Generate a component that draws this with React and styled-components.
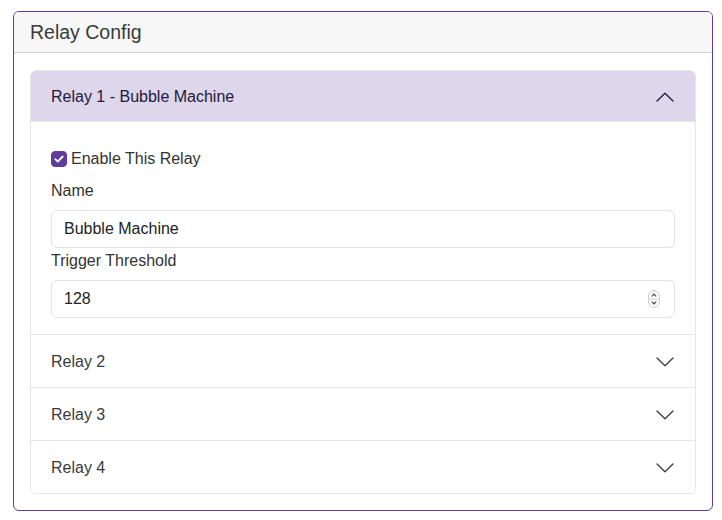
import React, { useState } from 'react'
import styled, { createGlobalStyle } from 'styled-components'

const GlobalStyle = createGlobalStyle`
  body {
    margin: 0;
    background: #ffffff;
    font-family: "Liberation Sans", Arial, sans-serif;
    color: #333333;
  }
  * { box-sizing: border-box; }
`

const Chevron = ({ up }) => (
  <svg width="18" height="10" viewBox="0 0 18 10" fill="none">
    <path
      d={up ? 'M1 9 L9 1.2 L17 9' : 'M1 1 L9 8.8 L17 1'}
      stroke={up ? '#2a1f44' : '#444'}
      strokeWidth="1.4"
      strokeLinejoin="round"
      strokeLinecap="round"
    />
  </svg>
)

const relays = ['Relay 2', 'Relay 3', 'Relay 4']

const App = () => {
  const [enabled, setEnabled] = useState(true)

  return (
    <>
      <GlobalStyle />
      <Card>
        <CardHeader>Relay Config</CardHeader>
        <CardBody>
          <Accordion>
            <Item>
              <ItemHeader active>
                Relay 1 - Bubble Machine
                <Chevron up />
              </ItemHeader>
              <ItemBody>
                <CheckRow onClick={() => setEnabled((p) => !p)}>
                  <Box checked={enabled}>
                    {enabled && (
                      <svg width="10" height="8" viewBox="0 0 10 8" fill="none">
                        <path d="M1.3 4.2 L3.8 6.5 L8.7 1.5" stroke="#fff" strokeWidth="1.8" strokeLinecap="round" strokeLinejoin="round" />
                      </svg>
                    )}
                  </Box>
                  Enable This Relay
                </CheckRow>
                <Label>Name</Label>
                <Field>
                  <Input defaultValue="Bubble Machine" />
                </Field>
                <Label>Trigger Threshold</Label>
                <Field>
                  <Input defaultValue="128" />
                  <Spinner>
                    <svg width="12" height="18" viewBox="0 0 12 18" fill="none">
                      <rect x="0.5" y="0.5" width="11" height="17" rx="5.5" stroke="#cfcfcf" fill="#fafafa" />
                      <line x1="0.5" y1="9" x2="11.5" y2="9" stroke="#d6d6d6" />
                      <path d="M3.8 6.3 L6 4 L8.2 6.3" stroke="#444" strokeWidth="1.1" />
                      <path d="M3.8 11.7 L6 14 L8.2 11.7" stroke="#444" strokeWidth="1.1" />
                    </svg>
                  </Spinner>
                </Field>
              </ItemBody>
            </Item>
            {relays.map((r) => (
              <Item key={r}>
                <ItemHeader>
                  {r}
                  <Chevron />
                </ItemHeader>
              </Item>
            ))}
          </Accordion>
        </CardBody>
      </Card>
    </>
  )
}

export default App

const Card = styled.div`
  margin: 11px 9px 0 13px;
  width: 700px;
  height: 500px;
  border: 1.5px solid #5e3c9f;
  border-radius: 6px;
  overflow: hidden;
  display: flex;
  flex-direction: column;
`
const CardHeader = styled.div`
  background: #f7f7f7;
  border-bottom: 1px solid #d4d4d4;
  padding: 8px 16px;
  font-size: 19.5px;
  line-height: 24px;
  color: #3a3a3a;
`
const CardBody = styled.div`
  padding: 17px 16px 0 16px;
`
const Accordion = styled.div`
  border: 1px solid #e6e6e6;
  border-radius: 6px;
  overflow: hidden;
`
const Item = styled.div`
  & + & {
    border-top: 1px solid #e6e6e6;
  }
`
const ItemHeader = styled.div`
  height: ${(p) => (p.active ? '51px' : '52px')};
  padding: ${(p) => (p.active ? '1px' : '2px')} 21px 0 20px;
  display: flex;
  align-items: center;
  justify-content: space-between;
  font-size: 16px;
  background: ${(p) => (p.active ? '#ded6eb' : '#ffffff')};
  color: ${(p) => (p.active ? '#23193a' : '#3a3a3a')};
  border-bottom: ${(p) => (p.active ? '1px solid #e6e6e6' : 'none')};
`
const ItemBody = styled.div`
  padding: 24px 20px 16px 20px;
  display: flex;
  flex-direction: column;
`
const CheckRow = styled.label`
  display: flex;
  align-items: center;
  gap: 4px;
  height: 24px;
  margin-bottom: 8px;
  padding-top: 1px;
  font-size: 16px;
  color: #333;
  cursor: pointer;
`
const Box = styled.span`
  width: 16px;
  height: 16px;
  border-radius: 4px;
  display: flex;
  align-items: center;
  justify-content: center;
  background: ${(p) => (p.checked ? '#5e3c9f' : '#fff')};
  border: 1px solid ${(p) => (p.checked ? '#5e3c9f' : '#bbb')};
`
const Label = styled.div`
  font-size: 16px;
  line-height: 24px;
  padding-top: 1px;
  margin-bottom: -1px;
  color: #333;
`
const Field = styled.div`
  height: 38px;
  margin-top: 8px;
  border: 1px solid #e2e2e2;
  border-radius: 6px;
  display: flex;
  align-items: center;
  padding: 0 12px;
`
const Input = styled.input`
  flex: 1;
  border: none;
  outline: none;
  font: inherit;
  font-size: 16px;
  color: #222;
  background: transparent;
  padding: 0;
`
const Spinner = styled.span`
  display: flex;
  align-items: center;
  margin-right: 2px;
`
